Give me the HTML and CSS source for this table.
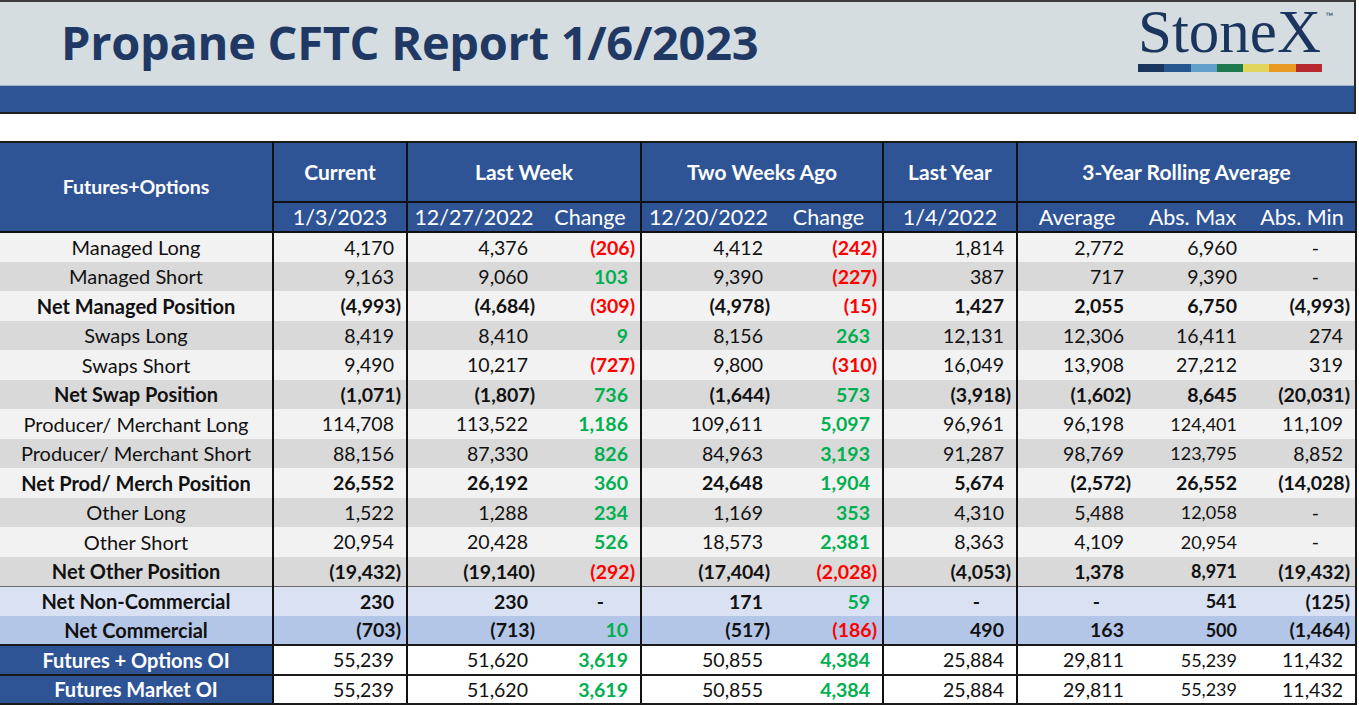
FILE: index.html
```html
<!DOCTYPE html>
<html lang="en">
<head>
<meta charset="utf-8">
<title>Propane CFTC Report 1/6/2023</title>
<link rel="stylesheet" href="styles.css">
</head>
<body>
<header class="banner">
  <div class="banner-top">
    <h1 class="title">Propane CFTC Report 1/6/2023</h1>
    <div class="logo">
      <div class="logo-word">StoneX<span class="tm">™</span></div>
      <div class="logo-bar">
        <span class="c1"></span><span class="c2"></span><span class="c3"></span><span class="c4"></span><span class="c5"></span><span class="c6"></span><span class="c7"></span>
      </div>
    </div>
  </div>
  <div class="banner-band"></div>
</header>

<table class="report">
  <colgroup>
    <col class="w-label"><col class="w-cur"><col class="w-lwd"><col class="w-lwc"><col class="w-twd"><col class="w-twc"><col class="w-ly"><col class="w-avg"><col class="w-max"><col class="w-min">
  </colgroup>
  <thead>
    <tr class="h1row">
      <th rowspan="2" class="corner">Futures+Options</th>
      <th>Current</th>
      <th colspan="2">Last Week</th>
      <th colspan="2">Two Weeks Ago</th>
      <th>Last Year</th>
      <th colspan="3">3-Year Rolling Average</th>
    </tr>
    <tr class="h2row">
      <th class="gl">1/3/2023</th>
      <th class="gl">12/27/2022</th>
      <th class="in">Change</th>
      <th class="gl">12/20/2022</th>
      <th class="in">Change</th>
      <th class="gl">1/4/2022</th>
      <th class="gl">Average</th>
      <th class="in">Abs. Max</th>
      <th class="in">Abs. Min</th>
    </tr>
  </thead>
  <tbody>
    <tr class="light">
      <th>Managed Long</th>
      <td class="gl p">4,170</td><td class="gl p">4,376</td><td class="in n chg">(206)</td><td class="gl p">4,412</td><td class="in n chg">(242)</td><td class="gl p">1,814</td><td class="gl p">2,772</td><td class="in p">6,960</td><td class="in d">-</td>
    </tr>
    <tr class="dark">
      <th>Managed Short</th>
      <td class="gl p">9,163</td><td class="gl p">9,060</td><td class="in p chg up">103</td><td class="gl p">9,390</td><td class="in n chg">(227)</td><td class="gl p">387</td><td class="gl p">717</td><td class="in p">9,390</td><td class="in d">-</td>
    </tr>
    <tr class="light bold">
      <th>Net Managed Position</th>
      <td class="gl">(4,993)</td><td class="gl">(4,684)</td><td class="in n chg">(309)</td><td class="gl">(4,978)</td><td class="in n chg">(15)</td><td class="gl p">1,427</td><td class="gl p">2,055</td><td class="in p">6,750</td><td class="in">(4,993)</td>
    </tr>
    <tr class="dark">
      <th>Swaps Long</th>
      <td class="gl p">8,419</td><td class="gl p">8,410</td><td class="in p chg up">9</td><td class="gl p">8,156</td><td class="in p chg up">263</td><td class="gl p">12,131</td><td class="gl p">12,306</td><td class="in p">16,411</td><td class="in p">274</td>
    </tr>
    <tr class="light">
      <th>Swaps Short</th>
      <td class="gl p">9,490</td><td class="gl p">10,217</td><td class="in n chg">(727)</td><td class="gl p">9,800</td><td class="in n chg">(310)</td><td class="gl p">16,049</td><td class="gl p">13,908</td><td class="in p">27,212</td><td class="in p">319</td>
    </tr>
    <tr class="dark bold">
      <th>Net Swap Position</th>
      <td class="gl">(1,071)</td><td class="gl">(1,807)</td><td class="in p chg up">736</td><td class="gl">(1,644)</td><td class="in p chg up">573</td><td class="gl">(3,918)</td><td class="gl">(1,602)</td><td class="in p">8,645</td><td class="in">(20,031)</td>
    </tr>
    <tr class="light">
      <th>Producer/ Merchant Long</th>
      <td class="gl p">114,708</td><td class="gl p">113,522</td><td class="in p chg up">1,186</td><td class="gl p">109,611</td><td class="in p chg up">5,097</td><td class="gl p">96,961</td><td class="gl p">96,198</td><td class="in p sm">124,401</td><td class="in p">11,109</td>
    </tr>
    <tr class="dark">
      <th>Producer/ Merchant Short</th>
      <td class="gl p">88,156</td><td class="gl p">87,330</td><td class="in p chg up">826</td><td class="gl p">84,963</td><td class="in p chg up">3,193</td><td class="gl p">91,287</td><td class="gl p">98,769</td><td class="in p sm">123,795</td><td class="in p">8,852</td>
    </tr>
    <tr class="light bold">
      <th>Net Prod/ Merch Position</th>
      <td class="gl p">26,552</td><td class="gl p">26,192</td><td class="in p chg up">360</td><td class="gl p">24,648</td><td class="in p chg up">1,904</td><td class="gl p">5,674</td><td class="gl">(2,572)</td><td class="in p">26,552</td><td class="in">(14,028)</td>
    </tr>
    <tr class="dark">
      <th>Other Long</th>
      <td class="gl p">1,522</td><td class="gl p">1,288</td><td class="in p chg up">234</td><td class="gl p">1,169</td><td class="in p chg up">353</td><td class="gl p">4,310</td><td class="gl p">5,488</td><td class="in p sm">12,058</td><td class="in d">-</td>
    </tr>
    <tr class="light">
      <th>Other Short</th>
      <td class="gl p">20,954</td><td class="gl p">20,428</td><td class="in p chg up">526</td><td class="gl p">18,573</td><td class="in p chg up">2,381</td><td class="gl p">8,363</td><td class="gl p">4,109</td><td class="in p sm">20,954</td><td class="in d">-</td>
    </tr>
    <tr class="dark bold sep">
      <th>Net Other Position</th>
      <td class="gl">(19,432)</td><td class="gl">(19,140)</td><td class="in n chg">(292)</td><td class="gl">(17,404)</td><td class="in n chg">(2,028)</td><td class="gl">(4,053)</td><td class="gl p">1,378</td><td class="in p sm">8,971</td><td class="in">(19,432)</td>
    </tr>
    <tr class="blue1 bold">
      <th>Net Non-Commercial</th>
      <td class="gl p">230</td><td class="gl p">230</td><td class="in d">-</td><td class="gl p">171</td><td class="in p chg up">59</td><td class="gl d">-</td><td class="gl d">-</td><td class="in p sm">541</td><td class="in">(125)</td>
    </tr>
    <tr class="blue2 bold sep">
      <th>Net Commercial</th>
      <td class="gl">(703)</td><td class="gl">(713)</td><td class="in p chg up">10</td><td class="gl">(517)</td><td class="in n chg">(186)</td><td class="gl p">490</td><td class="gl p">163</td><td class="in p sm">500</td><td class="in">(1,464)</td>
    </tr>
    <tr class="oi sep">
      <th>Futures + Options OI</th>
      <td class="gl p">55,239</td><td class="gl p">51,620</td><td class="in p chg up">3,619</td><td class="gl p">50,855</td><td class="in p chg up">4,384</td><td class="gl p">25,884</td><td class="gl p">29,811</td><td class="in p sm">55,239</td><td class="in p">11,432</td>
    </tr>
    <tr class="oi sep">
      <th>Futures Market OI</th>
      <td class="gl p">55,239</td><td class="gl p">51,620</td><td class="in p chg up">3,619</td><td class="gl p">50,855</td><td class="in p chg up">4,384</td><td class="gl p">25,884</td><td class="gl p">29,811</td><td class="in p sm">55,239</td><td class="in p">11,432</td>
    </tr>
  </tbody>
</table>
</body>
</html>
```

FILE: styles.css
```css
html, body {
  margin: 0;
  padding: 0;
  background: #ffffff;
}

body {
  width: 1359px;
  height: 705px;
  overflow: hidden;
  font-family: Lato, "Liberation Sans", sans-serif;
  color: #111111;
}

/* ---------- banner ---------- */
.banner {
  width: 1356px;
  box-sizing: border-box;
  border-top: 2px solid #3b3b3b;
  border-right: 2px solid #2b2b2b;
  border-bottom: 2px solid #1e1e1e;
}

.banner-top {
  height: 84px;
  background: #d6dde1;
  display: flex;
  justify-content: space-between;
  align-items: flex-start;
  padding: 0 32px 0 61px;
  box-sizing: border-box;
  border-bottom: 1px solid #9fb0c8;
}

.title {
  margin: 17px 0 0 0;
  font-family: "Open Sans", "Liberation Sans", sans-serif;
  font-weight: 700;
  font-size: 47px;
  line-height: 1;
  color: #1f3864;
  letter-spacing: -0.3px;
}

.logo {
  display: flex;
  flex-direction: column;
  align-items: stretch;
  margin-top: -2px;
}

.logo-word {
  position: relative;
  font-family: "Liberation Serif", "DejaVu Serif", serif;
  font-size: 61px;
  line-height: 1.05;
  color: #1a365e;
  white-space: nowrap;
  padding-right: 1px;
}

.tm {
  position: absolute;
  left: 100%;
  top: 12px;
  margin-left: 3px;
  font-family: "Liberation Sans", sans-serif;
  font-size: 8px;
  line-height: 1;
  color: #1a365e;
}

.logo-bar {
  display: flex;
  height: 8px;
  margin-top: 0;
}

.logo-bar span {
  flex: 1;
}
.c1 { background: #1b365d; }
.c2 { background: #26578e; }
.c3 { background: #62a0cb; }
.c4 { background: #1e7a4e; }
.c5 { background: #e2d55c; }
.c6 { background: #e99a22; }
.c7 { background: #b8282f; }

.banner-band {
  height: 26px;
  background: #2f5496;
}

/* ---------- table ---------- */
.report {
  margin-top: 27px;
  width: 1356px;
  table-layout: fixed;
  border-collapse: collapse;
  border-top: 2px solid #1a1a1a;
  border-right: 2px solid #1a1a1a;
  font-size: 19.5px;
}

.w-label { width: 273px; }
.w-cur { width: 134px; }
.w-lwd { width: 133px; }
.w-lwc { width: 101px; }
.w-twd { width: 134px; }
.w-twc { width: 108px; }
.w-ly { width: 134px; }
.w-avg { width: 119px; }
.w-max { width: 113px; }
.w-min { width: 107px; }

.report th,
.report td {
  padding: 0;
  white-space: nowrap;
  overflow: hidden;
}

.report thead th {
  background: #2f5496;
  color: #ffffff;
  text-align: center;
}

.h1row th {
  height: 56px;
  font-weight: 700;
  font-size: 21px;
  border-left: 2px solid #111111;
  border-bottom: 2px solid #111111;
  padding-bottom: 2px;
}

.report thead th.corner {
  font-size: 19.5px;
  border-left: none;
  border-right: 2px solid #111111;
  border-bottom: 2px solid #111111;
  padding: 0 0 2px 0;
}

.h2row th {
  height: 28px;
  font-weight: 400;
  font-size: 21.5px;
  border-bottom: 2px solid #111111;
}

.gl {
  border-left: 2px solid #111111;
}

.report tbody tr {
  height: 29.5px;
}

.report tbody th {
  text-align: center;
  font-weight: 400;
  font-size: 20px;
  border-right: 2px solid #111111;
}

.report tbody td {
  text-align: right;
  padding-right: 5px;
}

.report tbody td.p {
  padding-right: 12px;
}

.report tbody td.d {
  padding-right: 36px;
}

.report tbody td.sm {
  font-size: 18px;
}

.light { background: #f2f2f2; }
.dark { background: #d9d9d9; }
.blue1 { background: #d9e1f2; }
.blue2 { background: #b4c6e7; }

.report tbody .bold th,
.report tbody .bold td {
  font-weight: 700;
}

.chg { font-weight: 700; }
.n { color: #ff0000; }
.up { color: #00b050; }

.sep th,
.sep td {
  border-bottom: 2px solid #1a1a1a;
}

.dark.sep th,
.dark.sep td {
  border-bottom: 1px solid #6b6b6b;
}

.oi td {
  background: #ffffff;
}

.report tbody .oi th {
  background: #2f5496;
  color: #ffffff;
  font-weight: 700;
}
```
